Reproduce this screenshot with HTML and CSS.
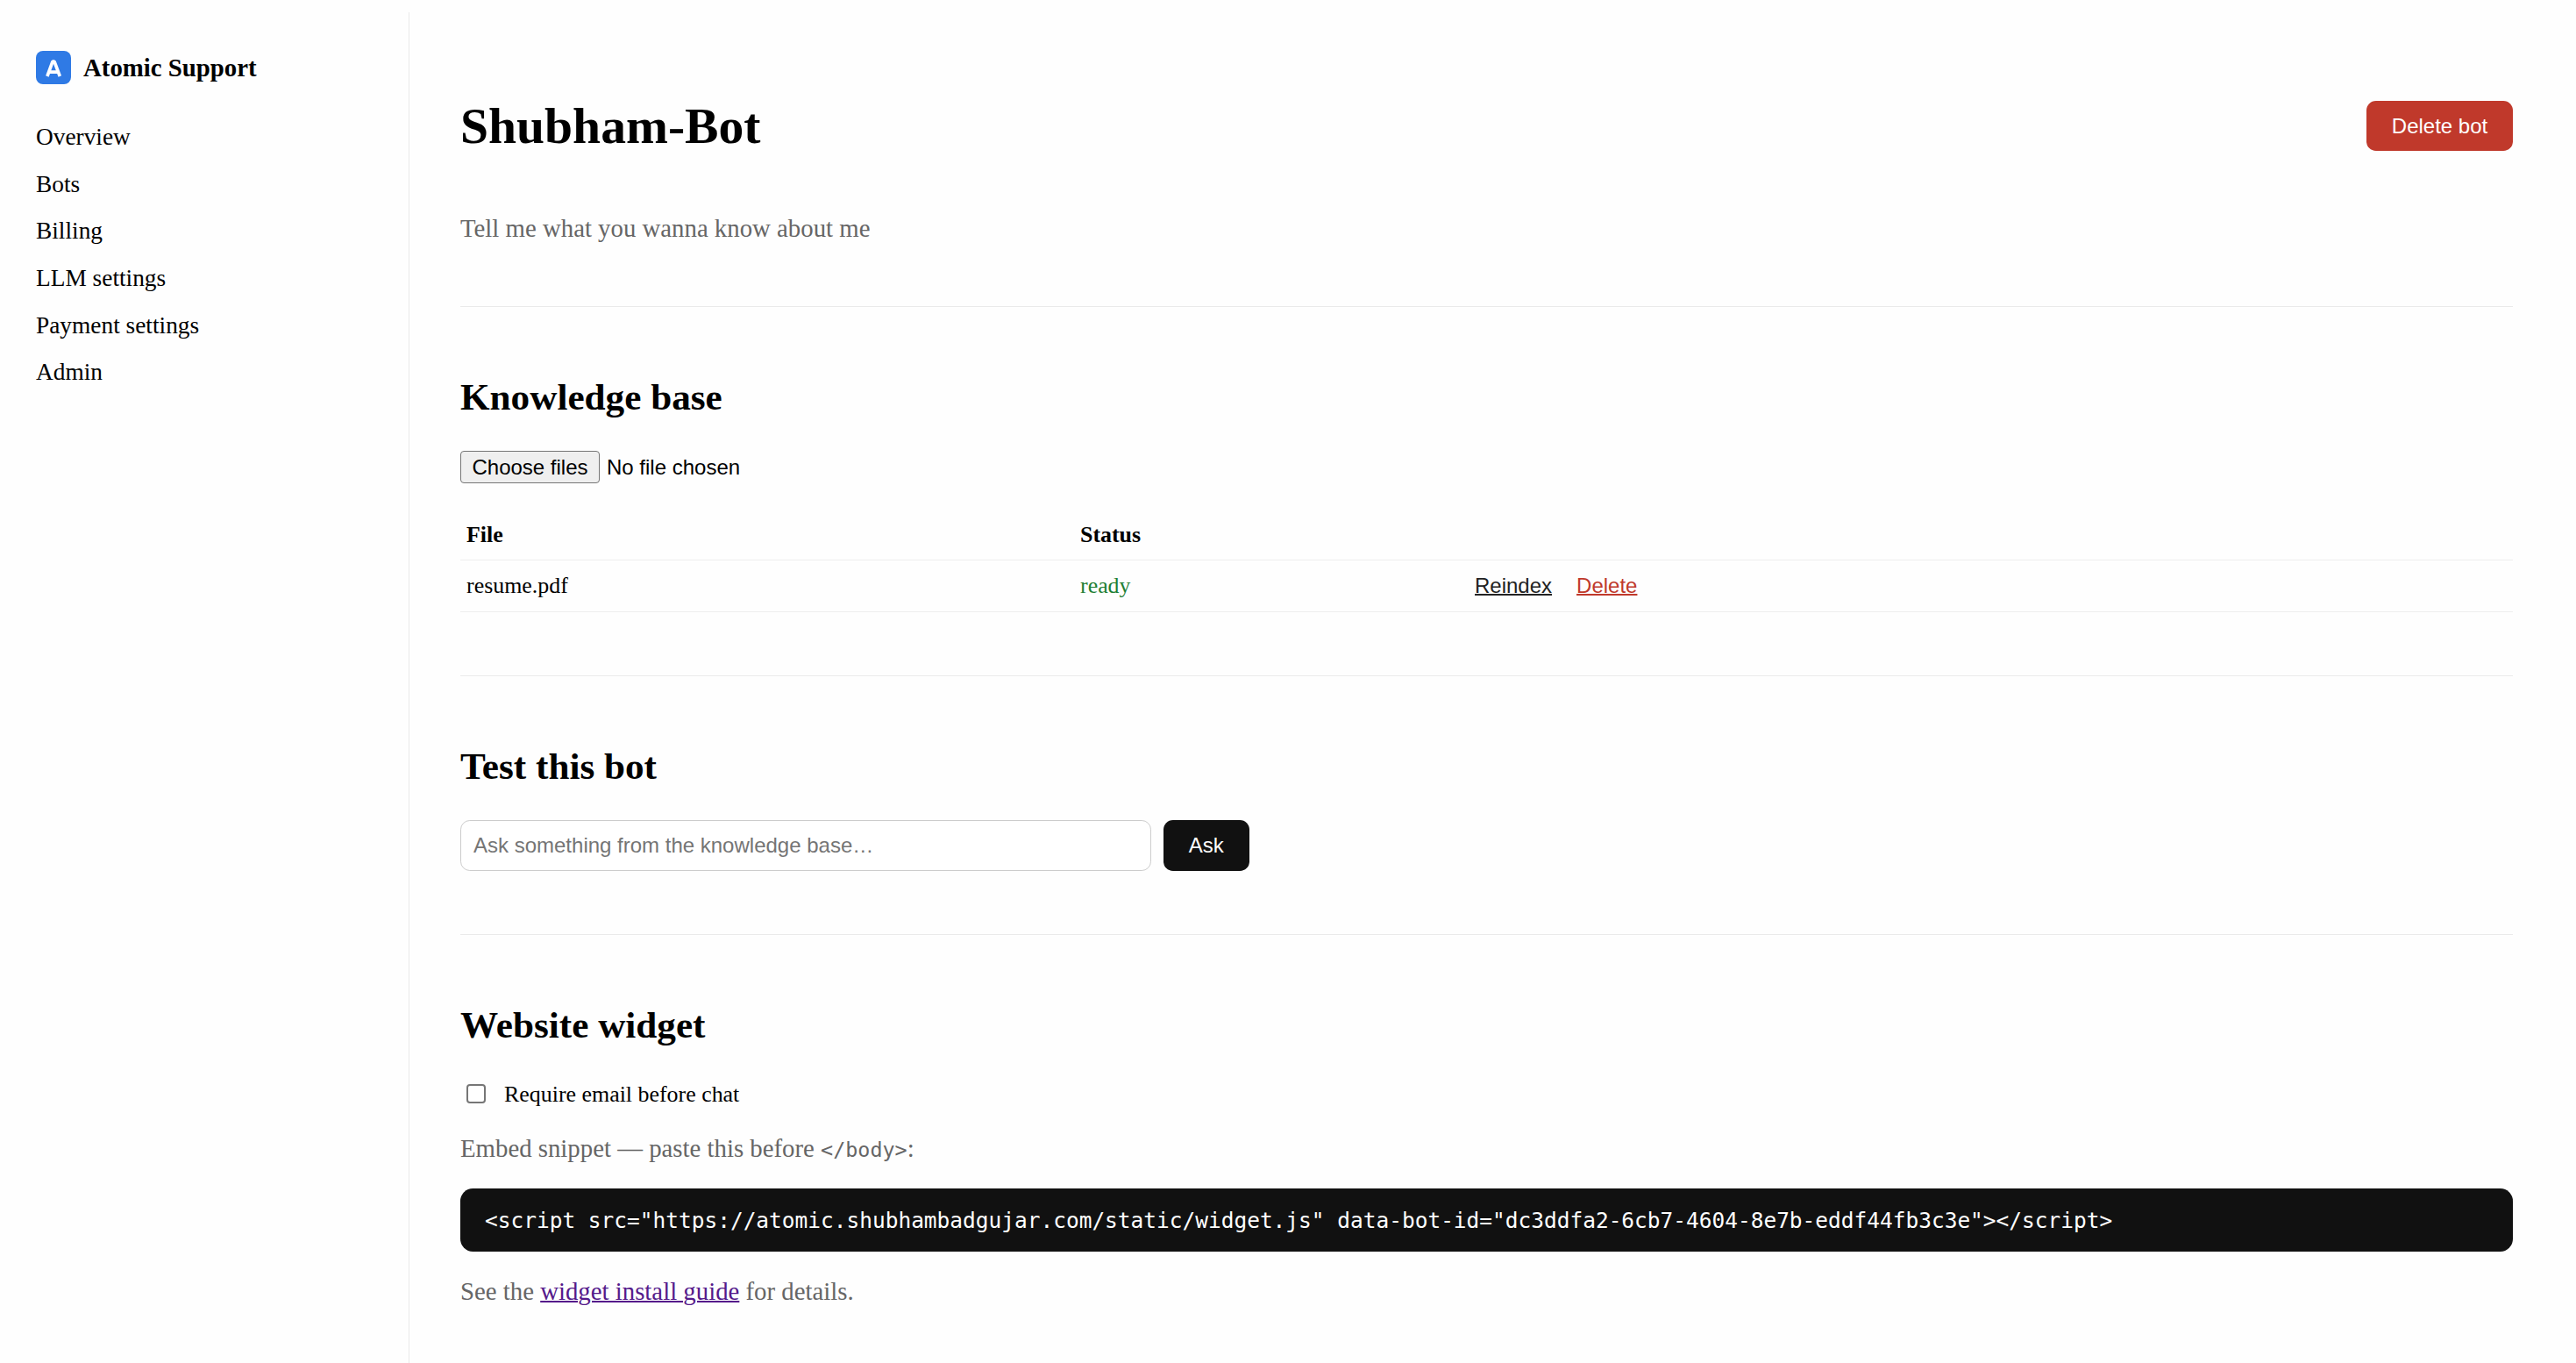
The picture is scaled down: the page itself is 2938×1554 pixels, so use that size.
FILE: index.html
```html
<!DOCTYPE html>
<html lang="en">
<head>
<meta charset="utf-8">
<title>Atomic Support</title>
<link rel="stylesheet" href="styles.css">
</head>
<body>
<div class="layout">
  <aside class="sidebar">
    <div class="brand">
      <svg class="logo" viewBox="0 0 40 38" preserveAspectRatio="none" aria-hidden="true">
        <rect width="40" height="38" rx="8" fill="#2f7ae5"/>
        <path d="M12.9 29 19 12.2h2L27.3 29M15.5 24.2h9.2" fill="none" stroke="#fff" stroke-width="3.7" stroke-linejoin="bevel"/>
      </svg>
      <span>Atomic Support</span>
    </div>
    <nav class="nav">
      <a>Overview</a>
      <a>Bots</a>
      <a>Billing</a>
      <a>LLM settings</a>
      <a>Payment settings</a>
      <a>Admin</a>
    </nav>
  </aside>
  <main class="main">
    <header class="page-head">
      <h1>Shubham-Bot</h1>
      <button class="btn danger">Delete bot</button>
    </header>
    <p class="muted intro">Tell me what you wanna know about me</p>

    <section class="section knowledge">
      <h2>Knowledge base</h2>
      <div class="file-picker"><button class="choose">Choose files</button><span>No file chosen</span></div>
      <table class="files">
        <thead><tr><th class="col-file">File</th><th class="col-status">Status</th><th></th></tr></thead>
        <tbody><tr><td>resume.pdf</td><td class="ready">ready</td><td><div class="actions"><button class="link">Reindex</button><button class="link delete">Delete</button></div></td></tr></tbody>
      </table>
    </section>

    <section class="section test">
      <h2>Test this bot</h2>
      <form class="ask">
        <input class="question" type="text" placeholder="Ask something from the knowledge base…">
        <button class="btn" type="button">Ask</button>
      </form>
    </section>

    <section class="section widget">
      <h2>Website widget</h2>
      <label class="check"><input type="checkbox">Require email before chat</label>
      <p class="muted embed">Embed snippet — paste this before <code>&lt;/body&gt;</code>:</p>
      <pre class="snippet">&lt;script src="https://atomic.shubhambadgujar.com/static/widget.js" data-bot-id="dc3ddfa2-6cb7-4604-8e7b-eddf44fb3c3e"&gt;&lt;/script&gt;</pre>
      <p class="muted guide">See the <a class="visited">widget install guide</a> for details.</p>
    </section>
  </main>
</div>
</body>
</html>
```
FILE: styles.css
```css
* { box-sizing: border-box; }

body {
  margin: 0;
  padding-top: 14px;
  background: #fefefe;
  color: #000;
  font-family: "Liberation Serif", "Times New Roman", serif;
  font-size: 28.8px;
  line-height: 33px;
  overflow: hidden;
}

h1, h2, p, pre { margin: 0; }

button, input { font-family: "Liberation Sans", Arial, sans-serif; font-size: 24px; }

.layout { display: flex; height: 1540px; }

.sidebar {
  flex: none;
  width: 467px;
  padding: 43px 14px 0 41px;
  border-right: 1px solid #e9e9e9;
}

.brand { display: flex; align-items: center; gap: 14px; height: 40px; font-weight: bold; }
.logo { width: 40px; height: 38px; }

.nav { display: flex; flex-direction: column; margin-top: 33px; font-size: 27.36px; }
.nav a { height: 53.7px; line-height: 53.7px; }

.main { flex: 1; padding: 58px 72px 0 58px; }

.page-head { display: flex; align-items: center; justify-content: space-between; height: 143px; }
h1 { font-size: 57.6px; line-height: 66px; }

.btn {
  height: 58px;
  padding: 0 28.8px;
  border: 0;
  border-radius: 10.8px;
  background: #111;
  color: #fff;
}
.btn.danger { height: 57px; background: #c0392b; }

.muted { color: #666; }
.intro { margin-top: 29px; }

.section { border-top: 1px solid #eaeaea; padding-top: 78px; }
.section + .section, .knowledge { margin-top: 72px; }
h2 { margin-bottom: 37px; font-size: 43.2px; line-height: 49px; }

.file-picker { display: flex; align-items: center; gap: 8px; height: 37px; font: 24px "Liberation Sans", Arial, sans-serif; }
.choose {
  width: 159px;
  height: 37px;
  padding: 0;
  border: 1px solid #767676;
  border-radius: 4px;
  background: #efefef;
  color: #000;
}

.files { width: 100%; margin-top: 28px; border-collapse: collapse; table-layout: fixed; font-size: 25.92px; text-align: left; }
.files th, .files td { height: 59px; padding: 0 7px; border-bottom: 1px solid #eee; }
.files th { padding-top: 2px; }
.col-file { width: 700px; }
.col-status { width: 450px; }
.ready { color: #1e7e34; }
.actions { display: flex; gap: 28px; }
.link { padding: 0; border: 0; background: none; color: #222; text-decoration: underline; text-decoration-thickness: 2px; }
.link.delete { color: #c0392b; }

.ask { display: flex; gap: 14px; }
.question {
  width: 788px;
  height: 58px;
  padding: 0 14px;
  border: 1px solid #ccc;
  border-radius: 10.8px;
  background: #fff;
}
.question::placeholder { color: #757575; }

.widget h2 { margin-bottom: 36px; }
.check { display: flex; align-items: center; gap: 21px; height: 36px; padding-top: 1px; font-size: 25.92px; }
.check input { appearance: none; width: 22px; height: 22px; margin: 0 0 0 7px; border: 2px solid #767676; border-radius: 4px; background: #fff; }

.embed { margin-top: 28px; }
.embed code { font: 23.4px/1 "DejaVu Sans Mono", monospace; }
.snippet {
  height: 72px;
  margin-top: 29px;
  padding: 1px 28px 0;
  border-radius: 14.4px;
  background: #111;
  color: #fff;
  font: 24.48px/72px "DejaVu Sans Mono", monospace;
}
.guide { margin-top: 29px; }
.visited { color: #551a8b; text-decoration: underline; text-decoration-thickness: 2px; }
```
